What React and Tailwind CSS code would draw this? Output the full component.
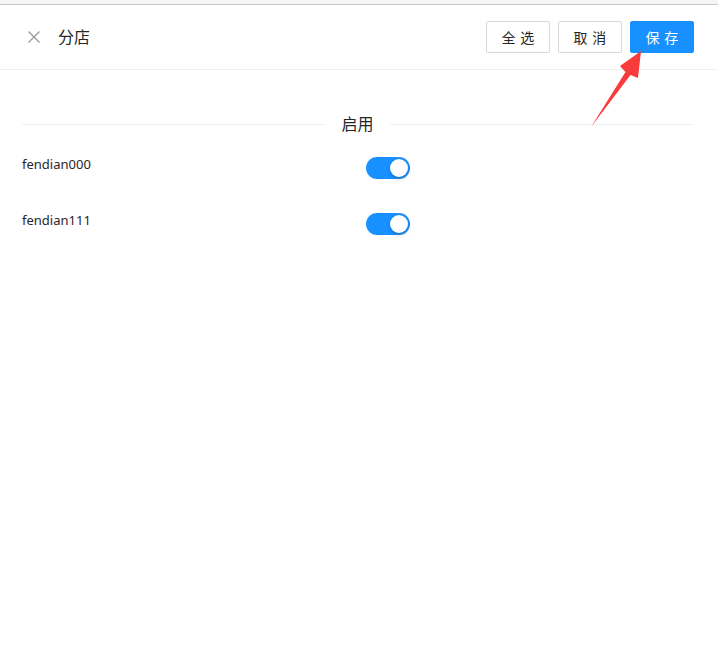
import React from 'react';

const font = { fontFamily: '"Noto Sans", "Noto Sans CJK SC", sans-serif' };

const Toggle = () => (
    <div className="relative w-[44px] h-[22px] rounded-full bg-[#1890ff] shrink-0">
        <div className="absolute top-[2px] right-[2px] w-[18px] h-[18px] rounded-full bg-white shadow-[0_2px_4px_rgba(0,35,11,0.2)]"></div>
    </div>
);

const Btn = ({ children, primary }) => (
    <button
        className={
            primary
                ? 'w-[64px] h-[32px] rounded-[2px] bg-[#1890ff] border border-[#1890ff] text-white text-[14px] flex items-center justify-center'
                : 'w-[64px] h-[32px] rounded-[2px] bg-white border border-[#d9d9d9] text-[#262626] text-[14px] flex items-center justify-center'
        }
    >
        <span className="tracking-[0.34em] -mr-[0.34em]">{children}</span>
    </button>
);

const rows = ['fendian000', 'fendian111'];

export default function App() {
    return (
        <div className="relative w-[718px] h-[646px] bg-white overflow-hidden" style={font}>
            {/* top strip */}
            <div className="h-[5px] bg-[#f5f5f5] border-b border-[#c8c8c8]"></div>

            {/* header */}
            <div className="h-[65px] border-b border-[#f0f0f0] flex items-center pl-[28px] pr-[24px]">
                <svg width="12" height="12" viewBox="0 0 12 12" className="shrink-0">
                    <path d="M0.5 0.5 L11.5 11.5 M11.5 0.5 L0.5 11.5" stroke="#999" strokeWidth="1.3" fill="none" />
                </svg>
                <div className="ml-[18px] text-[16px] text-[#262626] leading-[24px]">分店</div>
                <div className="ml-auto flex gap-[8px]">
                    <Btn>全选</Btn>
                    <Btn>取消</Btn>
                    <Btn primary>保存</Btn>
                </div>
            </div>

            {/* body */}
            <div className="px-[22px] pr-[25px]">
                <div className="mt-[42px] flex items-center">
                    <div className="flex-1 h-px bg-[#f0f0f0]"></div>
                    <div className="px-[16px] text-[16px] leading-[24px] text-[#262626]">启用</div>
                    <div className="flex-1 h-px bg-[#f0f0f0]"></div>
                </div>

                <div className="mt-[17px]">
                    {rows.map((r) => (
                        <div key={r} className="h-[56px] flex items-start">
                            <div className="w-[344px] mt-[1px] text-[13px] leading-[20px] text-[#262626]">{r}</div>
                            <div className="mt-[4px]">
                                <Toggle />
                            </div>
                        </div>
                    ))}
                </div>
            </div>

            {/* annotation arrow */}
            <svg className="absolute inset-0 pointer-events-none" width="718" height="646">
                <polygon
                    points="641,51 638,78 630.5,75 591,127 625.5,72 620,66"
                    fill="#f93b3b"
                />
            </svg>
        </div>
    );
}
